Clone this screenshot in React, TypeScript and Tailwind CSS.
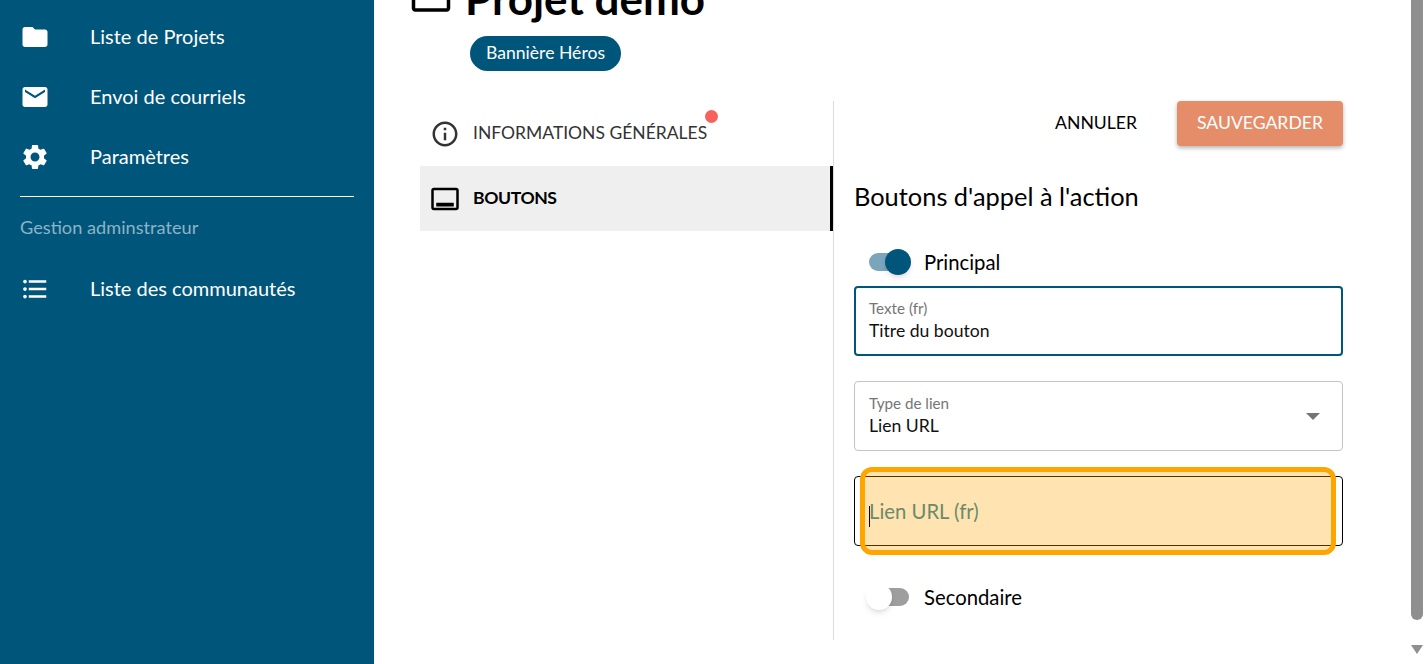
import { ReactNode } from "react";

const IconBox = ({ d, className }: { d: string; className?: string }) => (
  <svg viewBox="0 0 24 24" fill="currentColor" className={className}>
    <path d={d} />
  </svg>
);

const folder = "M10 4H4c-1.1 0-1.99.9-1.99 2L2 18c0 1.1.9 2 2 2h16c1.1 0 2-.9 2-2V8c0-1.1-.9-2-2-2h-8l-2-2z";
const mail = "M20 4H4c-1.1 0-1.99.9-1.99 2L2 18c0 1.1.9 2 2 2h16c1.1 0 2-.9 2-2V6c0-1.1-.9-2-2-2zm0 4l-8 5-8-5V6l8 5 8-5v2z";
const gear = "M19.14 12.94c.04-.3.06-.61.06-.94 0-.32-.02-.64-.07-.94l2.03-1.58c.18-.14.23-.41.12-.61l-1.92-3.32c-.12-.22-.37-.29-.59-.22l-2.39.96c-.5-.38-1.03-.7-1.62-.94l-.36-2.54c-.04-.24-.24-.41-.48-.41h-3.84c-.24 0-.43.17-.47.41l-.36 2.54c-.59.24-1.13.57-1.62.94l-2.39-.96c-.22-.08-.47 0-.59.22L2.74 8.87c-.12.21-.08.47.12.61l2.03 1.58c-.05.3-.09.63-.09.94s.02.64.07.94l-2.03 1.58c-.18.14-.23.41-.12.61l1.92 3.32c.12.22.37.29.59.22l2.39-.96c.5.38 1.03.7 1.62.94l.36 2.54c.05.24.24.41.48.41h3.84c.24 0 .44-.17.47-.41l.36-2.54c.59-.24 1.13-.56 1.62-.94l2.39.96c.22.08.47 0 .59-.22l1.92-3.32c.12-.22.07-.47-.12-.61l-2.01-1.58zM12 15.6c-1.98 0-3.6-1.62-3.6-3.6s1.62-3.6 3.6-3.6 3.6 1.62 3.6 3.6-1.62 3.6-3.6 3.6z";
const list = "M4 10.5c-.83 0-1.5.67-1.5 1.5s.67 1.5 1.5 1.5 1.5-.67 1.5-1.5-.67-1.5-1.5-1.5zm0-6c-.83 0-1.5.67-1.5 1.5S3.17 7.5 4 7.5 5.5 6.83 5.5 6 4.83 4.5 4 4.5zm0 12c-.83 0-1.5.68-1.5 1.5s.68 1.5 1.5 1.5 1.5-.68 1.5-1.5-.67-1.5-1.5-1.5zM7 19h14v-2H7v2zm0-6h14v-2H7v2zm0-8v2h14V5H7z";
const info = "M11 7h2v2h-2zm0 4h2v6h-2zm1-9C6.48 2 2 6.48 2 12s4.48 10 10 10 10-4.48 10-10S17.52 2 12 2zm0 18c-4.41 0-8-3.59-8-8s3.59-8 8-8 8 3.59 8 8-3.59 8-8 8z";
const callToAction = "M21 3H3c-1.1 0-2 .9-2 2v14c0 1.1.9 2 2 2h18c1.1 0 2-.9 2-2V5c0-1.1-.9-2-2-2zm0 16H3V5h18v14zM5 15h14v3H5z";
const outlineBox = "M21 3H3c-1.1 0-2 .9-2 2v14c0 1.1.9 2 2 2h18c1.1 0 2-.9 2-2V5c0-1.1-.9-2-2-2zm0 16H3V5h18v14z";

const NavItem = ({ icon, label }: { icon: string; label: ReactNode }) => (
  <div className="flex h-[60px] items-center pl-[20px]">
    <IconBox d={icon} className="h-[30px] w-[30px] text-white" />
    <span className="ml-[40px] pb-[2px] text-[20px] text-white">{label}</span>
  </div>
);

const Switch = ({ on }: { on: boolean }) =>
  on ? (
    <div className="relative h-[18px] w-[38px] rounded-full bg-[#7ba5bb]">
      <div className="absolute left-[16px] top-[-4px] h-[26px] w-[26px] rounded-full bg-[#00557a] shadow-md" />
    </div>
  ) : (
    <div className="relative h-[18px] w-[40px] rounded-full bg-[#9e9e9e]">
      <div className="absolute left-[-3px] top-[-4px] h-[26px] w-[26px] rounded-full bg-white shadow-md" />
    </div>
  );

export default function App() {
  return (
    <div className="flex h-[664px] w-[1427px] overflow-hidden bg-white font-['Lato','Liberation_Sans',sans-serif]">
      <aside className="w-[374px] shrink-0 bg-[#00557a] pt-[7px]">
        <NavItem icon={folder} label="Liste de Projets" />
        <NavItem icon={mail} label="Envoi de courriels" />
        <NavItem icon={gear} label="Paramètres" />
        <div className="mx-[20px] mt-[9px] h-px bg-white" />
        <div className="ml-[20px] mt-[18px] pb-[1px] text-[18.2px] leading-[24px] text-[#8db3c6]">Gestion adminstrateur</div>
        <div className="mt-[19px]">
          <NavItem icon={list} label="Liste des communautés" />
        </div>
      </aside>

      <main className="relative w-[1053px] shrink-0">
        <div className="-mt-[20px] ml-[36px] flex h-[40px] items-center">
          <IconBox d={outlineBox} className="-mt-[8px] h-[42px] w-[42px] text-black" />
          <h1 className="ml-[13px] pb-[4px] text-[44px] font-bold leading-[40px] text-black">Projet demo</h1>
        </div>
        <div className="ml-[96px] mt-[16px] flex h-[35px] w-[151px] items-center justify-center rounded-full bg-[#00557a] pb-[1px] text-[17.6px] text-white">
          Bannière Héros
        </div>

        <div className="ml-[46px] mt-[30px] flex h-[539px] w-[923px]">
          <div className="h-full w-[414px] border-r border-[#dcdcdc]">
            <div className="relative flex h-[65px] items-center">
              <IconBox d={info} className="ml-[10px] h-[30px] w-[30px] text-[#333333]" />
              <span className="ml-[13px] text-[17.5px] text-[#333333]">INFORMATIONS GÉNÉRALES</span>
              <div className="absolute left-[285px] top-[9px] h-[13px] w-[13px] rounded-full bg-[#f7635c]" />
            </div>
            <div className="flex h-[65px] items-center border-r-[3px] border-black bg-[#efefef]">
              <IconBox d={callToAction} className="ml-[10px] h-[30px] w-[30px] text-black" />
              <span className="ml-[13px] text-[17.6px] font-bold tracking-[-0.4px] text-black">BOUTONS</span>
            </div>
          </div>

          <div className="w-[509px] pl-[20px]">
            <div className="flex h-[45px] items-center justify-end">
              <span className="mr-[40px] text-[17.6px] text-black">ANNULER</span>
              <div className="flex h-[45px] w-[166px] items-center justify-center rounded-[4px] bg-[#e58d69] text-[17.6px] text-white shadow-[0_2px_4px_rgba(0,0,0,0.3)]">
                SAUVEGARDER
              </div>
            </div>

            <h2 className="mt-[34px] text-[25.4px] leading-[32px] text-black">Boutons d'appel à l'action</h2>

            <div className="ml-[15px] mt-[37px] flex h-[26px] items-center">
              <Switch on />
              <span className="ml-[17px] text-[20.3px] text-black">Principal</span>
            </div>

            <div className="mt-[11px] flex h-[70px] w-[489px] flex-col justify-center rounded-[4px] border-2 border-[#00557a] pb-[2px] pl-[13px]">
              <span className="text-[15.2px] leading-[18px] text-[#757575]">Texte (fr)</span>
              <span className="mt-[2px] text-[17.6px] leading-[23px] text-[#111111]">Titre du bouton</span>
            </div>

            <div className="relative mt-[25px] flex h-[70px] w-[489px] flex-col justify-center rounded-[4px] border border-[#c4c4c4] pb-[2px] pl-[14px]">
              <span className="text-[15.2px] leading-[18px] text-[#757575]">Type de lien</span>
              <span className="mt-[2px] text-[17.6px] leading-[23px] text-[#111111]">Lien URL</span>
              <div className="absolute right-[22px] top-[31px] h-0 w-0 border-x-[7px] border-t-[7px] border-x-transparent border-t-[#757575]" />
            </div>

            <div className="relative mt-[25px] flex h-[70px] w-[489px] items-center rounded-[4px] border border-black pl-[14px]">
              <div className="absolute -inset-y-[10px] left-[5px] right-[6px] rounded-[12px] border-[5px] border-[#ffa500] bg-[#ffa500]/30" />
              <div className="absolute left-[14px] top-[29px] h-[21px] w-px bg-black" />
              <span className="relative text-[20.3px] text-[#6b8a6b]">Lien URL (fr)</span>
            </div>

            <div className="ml-[15px] mt-[38px] flex h-[26px] items-center">
              <Switch on={false} />
              <span className="ml-[15px] text-[20.3px] text-black">Secondaire</span>
            </div>
          </div>
        </div>

        <div className="absolute right-0 top-0 flex h-full w-[16px] flex-col items-center bg-white">
          <div className="ml-[-4px] h-[620px] w-[12px] shrink-0 rounded-b-[6px] bg-[#8f8f8f]" />
          <div className="ml-[-4px] mt-[25px] h-0 w-0 border-x-[6px] border-t-[9px] border-x-transparent border-t-[#8f8f8f]" />
        </div>
      </main>
    </div>
  );
}
